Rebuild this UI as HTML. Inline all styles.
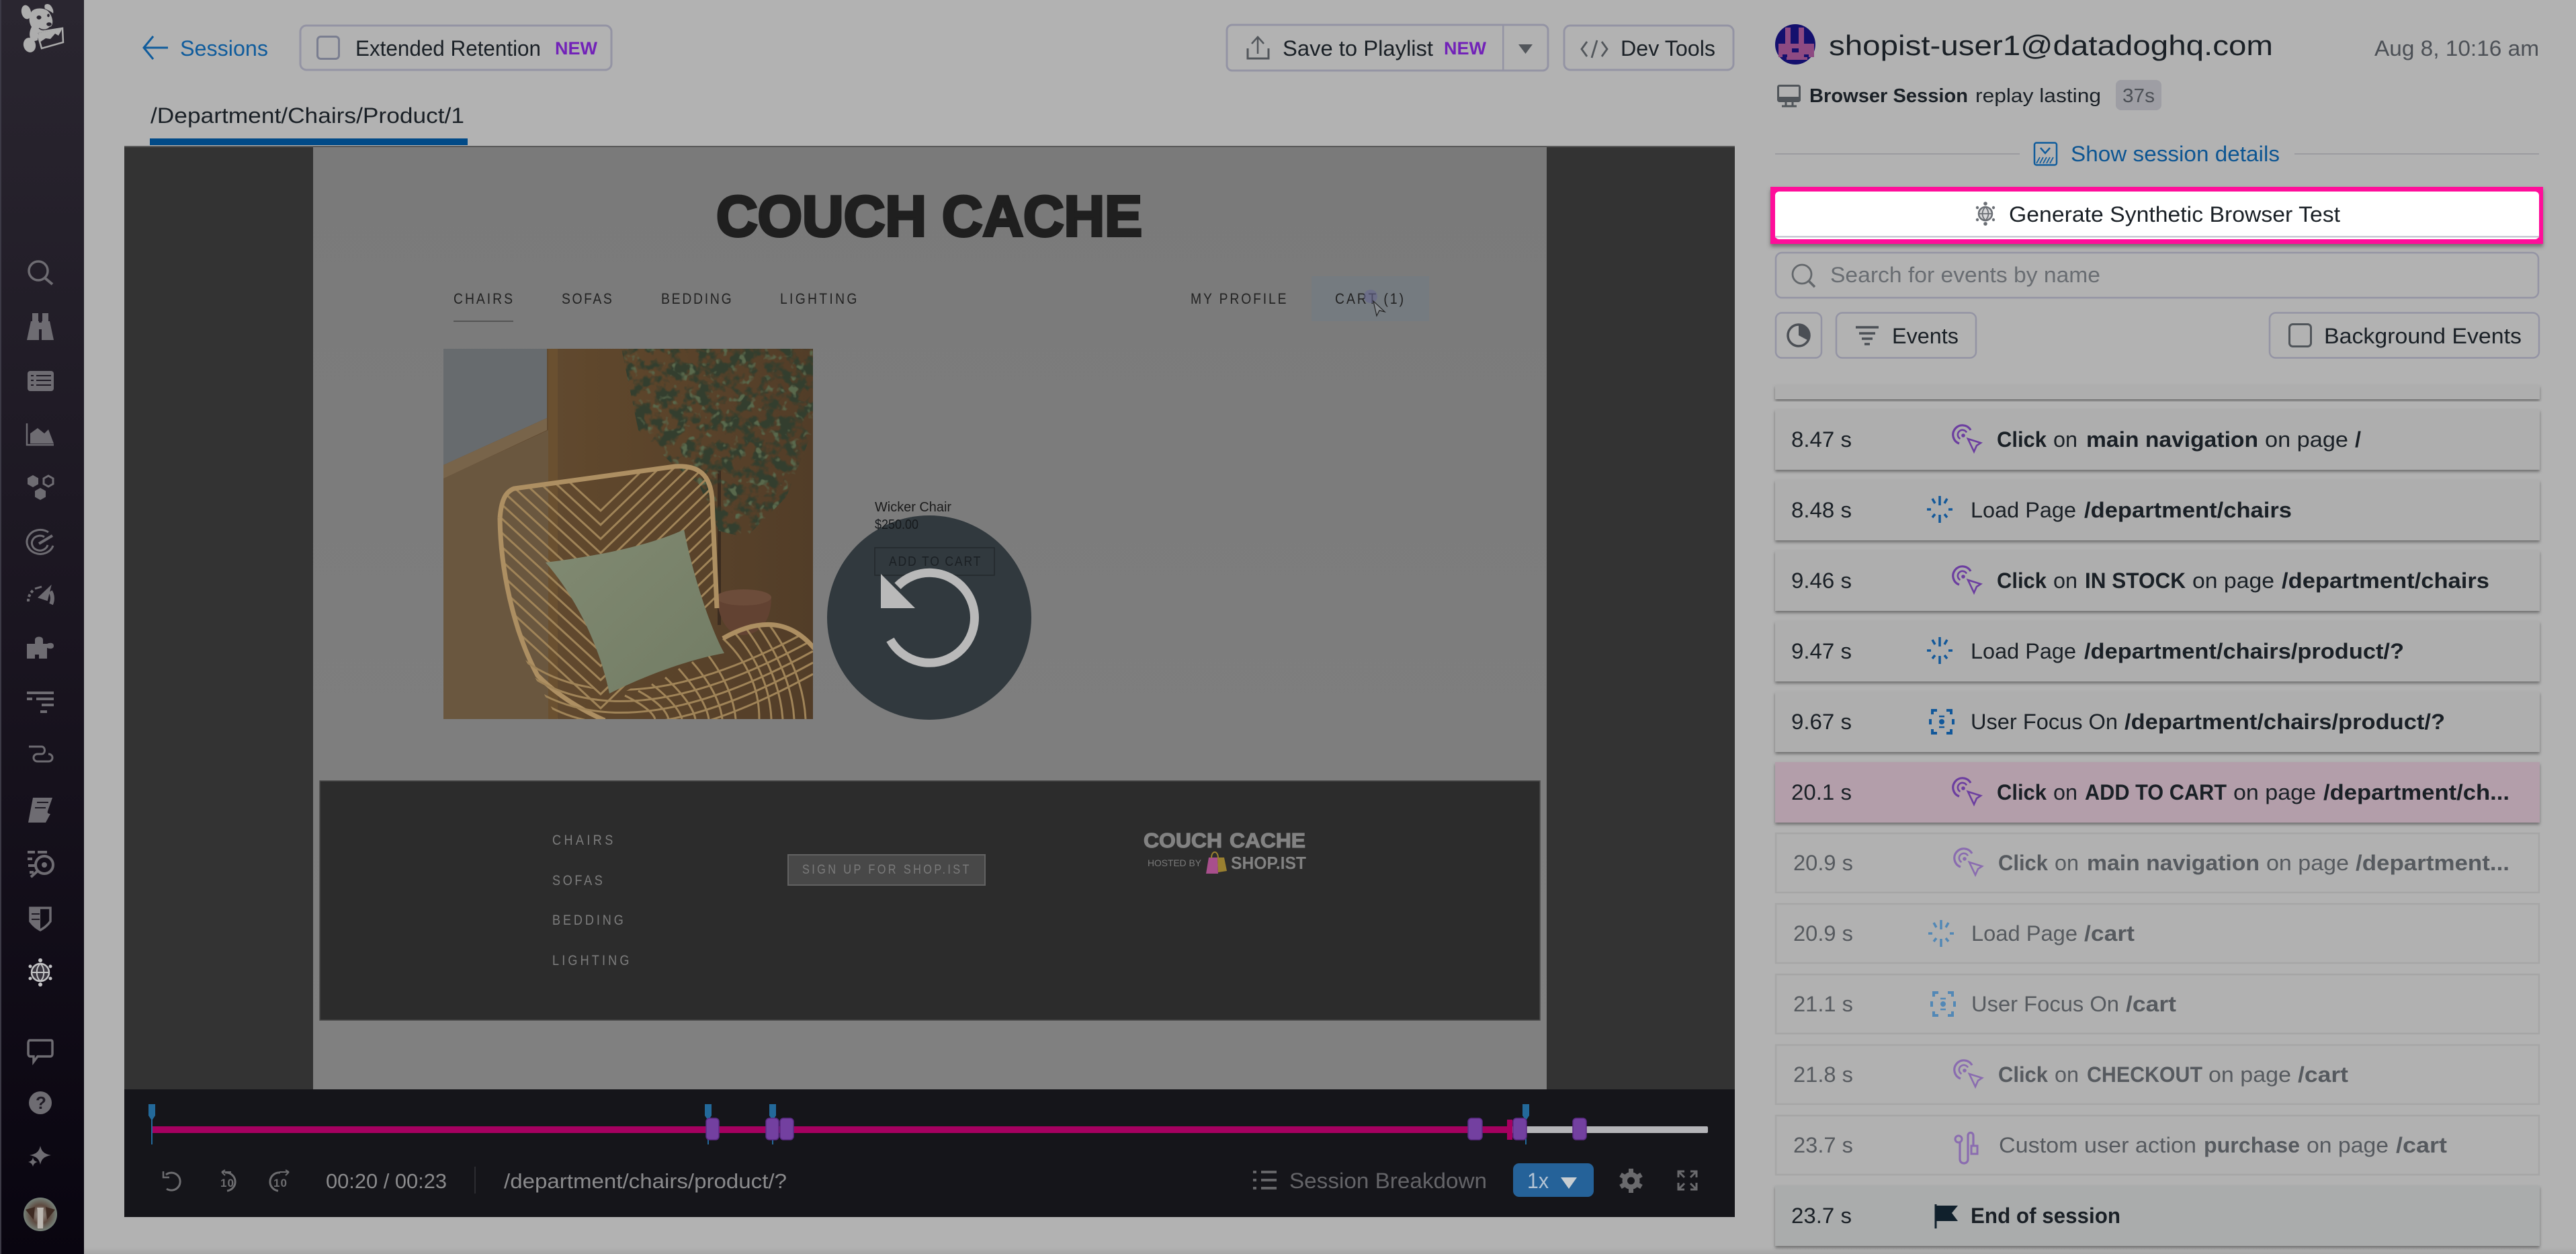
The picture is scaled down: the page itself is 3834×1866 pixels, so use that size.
<!DOCTYPE html>
<html><head><meta charset="utf-8"><title>Session Replay</title>
<style>
html,body{margin:0;padding:0;background:#b2b2b2;width:3834px;height:1866px;overflow:hidden}
svg{display:block}
text{font-family:"Liberation Sans",sans-serif;white-space:pre}
.d{fill:#1a2026;font-size:32px}
.b{font-weight:700}
.f{fill:#565a5f;font-size:32px}
.w{fill:#222;font-size:22px}
.ft{fill:#7d7d7d;font-size:21px}
.c{fill:#8a8a8c;font-size:32px}
</style></head><body>
<svg xmlns="http://www.w3.org/2000/svg" width="3834" height="1866" viewBox="0 0 3834 1866">
<defs>
<linearGradient id="side" x1="0" y1="0" x2="0" y2="1"><stop offset="0" stop-color="#2a2630"/><stop offset=".5" stop-color="#1a1520"/><stop offset="1" stop-color="#090510"/></linearGradient>
<linearGradient id="pg" x1="0" y1="0" x2="0" y2="1"><stop offset="0" stop-color="#7a7a7a"/><stop offset="1" stop-color="#808080"/></linearGradient>
<linearGradient id="wood" x1="0" y1="0" x2="1" y2="0"><stop offset="0" stop-color="#66503a"/><stop offset=".4" stop-color="#5f472c"/><stop offset="1" stop-color="#523d28"/></linearGradient>
<linearGradient id="pil" x1="0" y1="0" x2="1" y2="1"><stop offset="0" stop-color="#818a72"/><stop offset="1" stop-color="#727c64"/></linearGradient>
<linearGradient id="bt" x1="0" y1="0" x2="0" y2="1"><stop offset="0" stop-color="#b2b2b2"/><stop offset="1" stop-color="#a6a6a6"/></linearGradient>
<radialGradient id="av"><stop offset="0" stop-color="#a09a94"/><stop offset=".55" stop-color="#5e4a40"/><stop offset="1" stop-color="#76827a"/></radialGradient>
<filter id="sh" x="-2%" y="-10%" width="104%" height="125%"><feDropShadow dx="0" dy="3" stdDeviation="2" flood-color="#555" flood-opacity=".7"/></filter>
<filter id="sh2" x="-2%" y="-10%" width="104%" height="130%"><feDropShadow dx="0" dy="4" stdDeviation="3" flood-color="#444" flood-opacity=".6"/></filter>
<filter id="leafD" x="0" y="0" width="100%" height="100%" color-interpolation-filters="sRGB"><feTurbulence type="fractalNoise" baseFrequency=".05" numOctaves="3" seed="7" result="n"/><feColorMatrix in="n" type="matrix" values="0 0 0 0 .2 0 0 0 0 .245 0 0 0 0 .18 6 0 0 0 -2.700" result="l"/><feComposite in="l" in2="SourceAlpha" operator="in"/></filter>
<filter id="leafL" x="0" y="0" width="100%" height="100%" color-interpolation-filters="sRGB"><feTurbulence type="fractalNoise" baseFrequency=".08" numOctaves="2" seed="21" result="n"/><feColorMatrix in="n" type="matrix" values="0 0 0 0 .35 0 0 0 0 .41 0 0 0 0 .3 7 0 0 0 -4.200" result="l"/><feComposite in="l" in2="SourceAlpha" operator="in"/></filter>
<clipPath id="img"><rect x="660" y="519" width="550" height="551"/></clipPath>
<clipPath id="back"><path d="M744 771C746 745 752 732 765 727L1005 694C1040 692 1058 706 1060 745L1067 905 1040 1000 890 1070 790 1000C760 930 745 850 744 771Z"/></clipPath>
<clipPath id="seat"><path d="M770 960L910 1040 1076 950C1120 925 1170 915 1210 965V1070H830Z"/></clipPath>
<g id="click" fill="none" stroke-width="2.600">
<path d="M25 6A14 14 0 1 0 8 26" stroke-width="3.200"/><path d="M19 9.500A7 7 0 1 0 9.500 19"/><circle cx="14" cy="14" r="2.800" stroke="none" fill="currentColor"/>
<path d="M21 19L40 25 34 29 30 38Z"/></g>
<g id="load" stroke-width="3.500" fill="none"><path d="M0-20V-6M-11-16L-7-9M11-16L7-9M-19 0H-13M13 0H19M-11 12L-7 7M11 12L7 7M0 8V20"/></g>
<g id="focus" fill="none" stroke-width="4"><path d="M5 8V2H12M26 2H33V8M5 30V36H12M26 36H33V30M2 15V23M36 15V23"/><path d="M15 11H23M15 27H23" stroke-width="2.500"/><circle cx="19" cy="19" r="4" fill="currentColor" stroke="none"/></g>
</defs>

<rect width="3834" height="1866" fill="#b2b2b2"/>
<rect y="1856" width="3834" height="10" fill="url(#bt)"/>

<!-- sidebar -->
<rect width="125" height="1866" fill="url(#side)"/><rect width="2" height="1866" fill="#3c3a46"/>
<g fill="#adadad">
<ellipse cx="39" cy="18" rx="7" ry="10.500" transform="rotate(-12 39 18)"/>
<path d="M67 7C70 5 74 6 76 9 79 13 80 17 79 20 76 17 71 15 67 13 66 11 66 9 67 7Z"/>
<path d="M47 17C52 11 66 11 72 17 77 23 79 30 78 35 77 41 70 44 60 46 56 47 56 52 56 60L48 62C42 54 44 46 47 40 42 32 43 23 47 17Z"/>
<ellipse cx="44" cy="67" rx="9" ry="11" transform="rotate(-15 44 67)"/>
</g>
<ellipse cx="58" cy="26" rx="3.500" ry="3" fill="#2a2630"/><ellipse cx="73" cy="36" rx="3.800" ry="2.800" fill="#2a2630"/><ellipse cx="72" cy="23" rx="1.800" ry="2.500" fill="#2a2630"/>
<path d="M58 42C64 46 70 45 75 40" fill="none" stroke="#2a2630" stroke-width="1.500"/>
<path d="M55 48L93 42 94 63 62 72Z" fill="#2a2630" stroke="#adadad" stroke-width="2.500"/>
<path d="M57 49L92 43 91 46 87 53 82 50 75 58 68 57 59 63Z" fill="#adadad"/>
<g fill="#6e6c72" stroke="#6e6c72">
<circle cx="57" cy="403" r="14" fill="none" stroke-width="3.500"/><path d="M66 413L78 423" stroke-width="4" fill="none"/>
<path d="M48 466h9v12h-9zM63 466h9v12h-9z" stroke="none"/><path d="M46 478h12v28H40zM74 478H62v28h18z" stroke="none"/><rect x="57" y="480" width="6" height="10" stroke="none"/>
<rect x="41" y="552" width="39" height="30" rx="4" stroke="none"/><path d="M46 559h4M46 566h4M46 573h4M54 559h22M54 566h22M54 573h22" stroke="#1e1a24" stroke-width="2" fill="none"/>
<path d="M40 630V662H80" fill="none" stroke-width="2.500"/><path d="M45 660V645L56 637 66 645 72 639 80 660Z" stroke="none"/>
<path d="M49 707L57 711.500V720.500L49 725 41 720.500V711.500ZM60 726L68 730.500V739.500L60 744 52 739.500V730.500Z" stroke="none"/><path d="M72 708L79 712V720L72 724 65 720V712Z" fill="none" stroke-width="3"/>
<g fill="none"><path d="M72 792A20 18 0 1 0 79 812" stroke-width="3"/><path d="M66 799A12 11 0 1 0 71 811" stroke-width="3"/><path d="M58 809L78 797" stroke-width="4"/></g>
<path d="M42 895A21 21 0 0 1 50 878" fill="none" stroke-width="4" stroke-dasharray="4 3"/><path d="M52 876L62 873" stroke-width="3"/><path d="M58 889L75 873 70 893Z" stroke-width="2"/><path d="M75 880A20 20 0 0 1 76 899" fill="none" stroke-width="6"/>
<path d="M40 958H52V952C52 946 64 946 64 952V958H70C74 956 80 956 80 961 80 966 74 966 70 964V980H58V974H52V980H40Z" stroke="none"/>
<path d="M40 1031H80M40 1040H48M54 1040H80M62 1049H80M60 1059H70" stroke-width="4" fill="none"/>
<path d="M43 1116H62C68 1116 68 1127 62 1127H56C48 1127 48 1138 56 1138H72C80 1138 80 1127 72 1127" fill="none" stroke-width="3" transform="translate(0,-5)"/>
<path d="M49 1187H78L71 1207C70 1210 72 1211 75 1211L68 1224H42Z" stroke="none"/><path d="M55 1194H72M52 1202H68" stroke="#1e1a24" stroke-width="2" fill="none"/>
<path d="M41 1268H52M56 1268H70M41 1278H48M42 1288H52M44 1298H50" stroke-width="4" fill="none"/><circle cx="66" cy="1287" r="13" fill="none" stroke-width="4"/><circle cx="66" cy="1287" r="4" stroke="none"/><path d="M56 1296L46 1305" stroke-width="4"/>
<path d="M45 1351H75V1371C70 1378 65 1381 60 1384 55 1381 50 1378 45 1371Z" fill="none" stroke-width="3.500"/><path d="M46 1352H60V1383C54 1380 50 1377 46 1371Z" stroke="none"/><path d="M47 1360H59M47 1368H59" stroke="#1e1a24" stroke-width="2"/>
</g>
<g fill="#c4c4c6">
<circle cx="60" cy="1447" r="13" fill="#3a3640" stroke="#c4c4c6" stroke-width="2.500"/><path d="M47 1447H73M60 1434C53 1440 53 1454 60 1460 67 1454 67 1440 60 1434Z" fill="none" stroke="#c4c4c6" stroke-width="2"/>
<circle cx="60" cy="1429" r="3"/><circle cx="60" cy="1465" r="3"/><circle cx="45" cy="1438" r="2.500"/><circle cx="75" cy="1438" r="2.500"/><circle cx="45" cy="1456" r="2.500"/><circle cx="75" cy="1456" r="2.500"/>
</g>
<g fill="#6e6c72" stroke="#6e6c72">
<path d="M44 1548H76C78 1548 78 1550 78 1552V1568C78 1570 77 1572 75 1572H56L50 1580V1572H45C43 1572 42 1570 42 1568V1552C42 1550 43 1548 44 1548Z" fill="none" stroke-width="3.500"/>
<circle cx="60" cy="1641" r="17" stroke="none"/>
<path d="M60 1705C62 1714 66 1717 76 1719 66 1721 62 1724 60 1733 58 1724 54 1721 44 1719 54 1717 58 1714 60 1705ZM49 1722C50 1727 52 1728 56 1729 52 1730 50 1732 49 1736 48 1732 46 1730 42 1729 46 1728 48 1727 49 1722Z" stroke="none"/>
</g>
<text x="53" y="1650" font-size="26" font-weight="700" fill="#1e1a24">?</text>
<circle cx="60" cy="1807" r="25" fill="url(#av)"/><path d="M55 1797C57 1805 55 1820 56 1828H64C65 1820 63 1805 65 1797Z" fill="#bdb8b2"/><path d="M38 1800L52 1796 50 1815ZM82 1800L68 1796 70 1815Z" fill="#3e2a22"/>

<!-- top left -->
<path d="M250 71H216M228 54L214 71 228 88" fill="none" stroke="#105c9c" stroke-width="3"/>
<text x="268" y="83" class="d" style="fill:#105c9c" textLength="131" lengthAdjust="spacingAndGlyphs">Sessions</text>
<rect x="447" y="38" width="463" height="66" rx="9" fill="none" stroke="#9494a4" stroke-width="3"/>
<rect x="472.500" y="54.500" width="32" height="33" rx="5" fill="none" stroke="#7a7e90" stroke-width="3"/>
<text x="529" y="83" class="d" textLength="276" lengthAdjust="spacingAndGlyphs">Extended Retention</text>
<text x="826" y="81" font-size="27" font-weight="700" fill="#7222b8" textLength="63" lengthAdjust="spacingAndGlyphs">NEW</text>
<text x="224" y="183" class="d" textLength="467" lengthAdjust="spacingAndGlyphs">/Department/Chairs/Product/1</text>
<rect x="223" y="206" width="473" height="10" fill="#014a87"/>

<!-- top right buttons -->
<path d="M1834 37H2296A8 8 0 0 1 2304 45V97A8 8 0 0 1 2296 105H1834A8 8 0 0 1 1826 97V45A8 8 0 0 1 1834 37Z" fill="none" stroke="#9494a4" stroke-width="3"/>
<rect x="2236" y="37" width="2.500" height="68" fill="#9494a4"/>
<path d="M1872 80V56M1863 65L1872 55 1881 65" fill="none" stroke="#52565b" stroke-width="2.500"/><path d="M1857 72V87H1888V72" fill="none" stroke="#52565b" stroke-width="3"/>
<text x="1909" y="83" class="d" textLength="224" lengthAdjust="spacingAndGlyphs">Save to Playlist</text>
<text x="2149" y="81" font-size="27" font-weight="700" fill="#7222b8" textLength="63" lengthAdjust="spacingAndGlyphs">NEW</text>
<path d="M2260 66H2281L2270.500 80Z" fill="#52565b"/>
<rect x="2328" y="38" width="252" height="66" rx="9" fill="none" stroke="#9494a4" stroke-width="3"/>
<path d="M2362 62L2354 73 2362 84M2384 62L2392 73 2384 84M2377 60L2369 86" fill="none" stroke="#52565b" stroke-width="2.800"/>
<text x="2412" y="83" class="d" textLength="141" lengthAdjust="spacingAndGlyphs">Dev Tools</text>

<!-- player -->
<rect x="185" y="217" width="2397" height="1404" fill="#333"/>
<rect x="185" y="217" width="2397" height="2" fill="#5a5a5a"/>
<rect x="466" y="219" width="1836" height="1402" fill="url(#pg)"/>
<g font-weight="700" fill="#1f1f1f" stroke="#1f1f1f" stroke-width="4" font-size="85">
<text x="1066" y="351" textLength="313" lengthAdjust="spacingAndGlyphs">COUCH</text>
<text x="1402" y="351" textLength="298" lengthAdjust="spacingAndGlyphs">CACHE</text>
</g>
<rect x="1952" y="411" width="175" height="67" fill="#757b80"/>
<text class="w" transform="translate(675 452) scale(.88 1)" textLength="100" lengthAdjust="spacing">CHAIRS</text>
<text class="w" transform="translate(836 452) scale(.88 1)" textLength="85" lengthAdjust="spacing">SOFAS</text>
<text class="w" transform="translate(984 452) scale(.88 1)" textLength="119" lengthAdjust="spacing">BEDDING</text>
<text class="w" transform="translate(1161 452) scale(.88 1)" textLength="130" lengthAdjust="spacing">LIGHTING</text>
<text class="w" transform="translate(1772 452) scale(.88 1)" textLength="162" lengthAdjust="spacing">MY PROFILE</text>
<text class="w" transform="translate(1987 452) scale(.88 1)" textLength="116" lengthAdjust="spacing">CART (1)</text>
<rect x="675" y="477" width="89" height="2" fill="#555"/>
<circle cx="2040" cy="441" r="10" fill="#66668e" opacity=".6"/>
<path d="M2044 448L2049 470 2053 462 2061 464Z" fill="#8a8e92" stroke="#222" stroke-width="1.200"/>

<!-- product image -->
<g clip-path="url(#img)">
<rect x="660" y="519" width="550" height="551" fill="url(#wood)"/>
<path d="M660 712L816 640V1070H660Z" fill="#6a573f"/>
<rect x="816" y="519" width="14" height="551" fill="#6a5030"/>
<path d="M660 519H814V622L660 692Z" fill="#676b6e"/>
<path d="M660 692L814 622V640L660 712Z" fill="#78644a"/>
<rect x="1068" y="700" width="5" height="230" fill="#3b2c20"/>
<path d="M1067 889H1148C1148 925 1130 945 1105 945 1085 945 1070 925 1067 889Z" fill="#624232"/><ellipse cx="1107" cy="889" rx="41" ry="12" fill="#6c4c3a"/>
<g filter="url(#leafD)"><path d="M925 519H1210V640L1170 740 1110 800 1070 790 1040 720 1000 690 950 640Z"/></g>
<g filter="url(#leafL)"><path d="M925 519H1210V640L1170 740 1110 800 1070 790 1040 720 1000 690 950 640Z"/></g>
<g clip-path="url(#back)" fill="none" stroke="#a08458" stroke-width="3">
<path d="M720 600L894 760 1080 580"/><path d="M720 621L894 781 1080 601"/><path d="M720 642L894 802 1080 622"/><path d="M720 663L894 823 1080 643"/><path d="M720 684L894 844 1080 664"/><path d="M720 705L894 865 1080 685"/><path d="M720 726L894 886 1080 706"/><path d="M720 747L894 907 1080 727"/><path d="M720 768L894 928 1080 748"/><path d="M720 789L894 949 1080 769"/><path d="M720 810L894 970 1080 790"/><path d="M720 831L894 991 1080 811"/><path d="M720 852L894 1012 1080 832"/><path d="M720 873L894 1033 1080 853"/><path d="M720 894L894 1054 1080 874"/>
</g>
<path d="M744 771C746 745 752 732 765 727L1005 694C1040 692 1058 706 1060 745L1067 905" fill="none" stroke="#ad8f62" stroke-width="7"/>
<path d="M744 771C745 850 765 940 800 1005Q840 1045 900 1072" fill="none" stroke="#ad8f62" stroke-width="7"/>
<g clip-path="url(#seat)" fill="none" stroke="#a08458" stroke-width="3">
<path d="M770 975Q920 1095 1210 935"/><path d="M770 992Q920 1112 1210 952"/><path d="M770 1009Q920 1129 1210 969"/><path d="M780 1026Q920 1146 1210 986"/><path d="M790 1043Q920 1163 1210 1003"/><path d="M1076 950Q1130 1000 1130 1070"/><path d="M1092 940Q1145 1000 1148 1070"/><path d="M1108 932Q1160 1000 1165 1070"/><path d="M1124 926Q1178 1000 1182 1070"/><path d="M1140 923Q1195 995 1199 1070"/><path d="M1050 970Q1090 1020 1095 1070"/><path d="M1030 985Q1070 1030 1075 1070"/><path d="M1010 995Q1050 1040 1055 1070"/><path d="M990 1008Q1030 1045 1035 1070"/><path d="M970 1018Q1010 1050 1015 1070"/><path d="M950 1028Q990 1050 995 1070"/><path d="M930 1035Q970 1055 975 1070"/>
</g>
<path d="M1076 950C1120 925 1170 915 1212 965" fill="none" stroke="#ad8f62" stroke-width="7"/>
<path d="M812 837C870 830 960 815 1018 788 1030 850 1055 930 1078 972 1030 980 960 1005 907 1032 890 950 850 880 812 837Z" fill="url(#pil)"/>
</g>

<text x="1302" y="761" font-size="20" fill="#1a1a1a" textLength="114" lengthAdjust="spacingAndGlyphs">Wicker Chair</text>
<circle cx="1383" cy="919" r="152" fill="#31393e"/>
<rect x="1302" y="815" width="178" height="41" fill="none" stroke="#22282c" stroke-width="1.500"/>
<text transform="translate(1323 842) scale(.88 1)" style="font-size:20px" fill="#1b2024" textLength="155" lengthAdjust="spacing">ADD TO CART</text>
<text x="1302" y="787" font-size="20" fill="#16191c" textLength="65" lengthAdjust="spacingAndGlyphs">$250.00</text>
<path d="M1336 872A67 67 0 1 1 1325 952" fill="none" stroke="#b9b9b9" stroke-width="13"/>
<path d="M1311 854V905H1362Z" fill="#b9b9b9"/>

<!-- footer -->
<rect x="476" y="1162" width="1816" height="356" fill="#2c2c2c" stroke="#4a4a4a" stroke-width="1.500"/>
<text class="ft" transform="translate(822 1257) scale(.86 1)" textLength="105" lengthAdjust="spacing">CHAIRS</text>
<text class="ft" transform="translate(822 1317) scale(.86 1)" textLength="87" lengthAdjust="spacing">SOFAS</text>
<text class="ft" transform="translate(822 1376) scale(.86 1)" textLength="123" lengthAdjust="spacing">BEDDING</text>
<text class="ft" transform="translate(822 1436) scale(.86 1)" textLength="133" lengthAdjust="spacing">LIGHTING</text>
<rect x="1173" y="1272" width="293" height="45" fill="#484848" stroke="#626262" stroke-width="2"/>
<text transform="translate(1194 1300) scale(.86 1)" font-size="19" fill="#7a7a7a" textLength="289" lengthAdjust="spacing">SIGN UP FOR SHOP.IST</text>
<g font-size="31" font-weight="700" fill="#828282" stroke="#828282" stroke-width="1.200">
<text x="1702" y="1261" textLength="117" lengthAdjust="spacingAndGlyphs">COUCH</text>
<text x="1830" y="1261" textLength="113" lengthAdjust="spacingAndGlyphs">CACHE</text>
</g>
<text x="1708" y="1289" font-size="14" fill="#7a7a7a" textLength="80" lengthAdjust="spacingAndGlyphs">HOSTED BY</text>
<path d="M1795 1300L1799 1276H1812L1813 1300Z" fill="#a84f8c"/><path d="M1812 1276H1822L1826 1296 1813 1298Z" fill="#9a8030"/><path d="M1803 1277C1803 1265 1813 1265 1813 1277" fill="none" stroke="#9a8030" stroke-width="2"/>
<text x="1832" y="1293" font-size="26" font-weight="700" fill="#828282" textLength="112" lengthAdjust="spacingAndGlyphs">SHOP.IST</text>

<!-- control bar -->
<rect x="185" y="1621" width="2397" height="190" fill="#15151a"/>
<rect x="226" y="1676" width="2024" height="10" fill="#a50060"/>
<rect x="2250" y="1676" width="292" height="10" rx="2" fill="#b4b4b8"/>
<rect x="2243" y="1666" width="8" height="30" fill="#a50060"/>
<g fill="#23699a">
<path d="M221 1643H231V1660L227 1666V1703H225V1666L221 1660Z"/>
<path d="M1049 1643H1059V1660L1055 1666V1703H1053V1666L1049 1660Z"/>
<path d="M1145 1643H1155V1660L1151 1666V1703H1149V1666L1145 1660Z"/>
<path d="M2266 1643H2276V1660L2272 1666V1703H2270V1666L2266 1660Z"/>
</g>
<g fill="#7340a0" stroke="#5c2a86" stroke-width="1.500">
<rect x="1051" y="1664" width="19" height="32" rx="5"/><rect x="1140" y="1664" width="19" height="32" rx="5"/><rect x="1161" y="1664" width="20" height="32" rx="5"/><rect x="2185" y="1664" width="21" height="32" rx="5"/><rect x="2252" y="1664" width="20" height="32" rx="5"/><rect x="2341" y="1664" width="20" height="32" rx="5"/>
</g>
<g fill="none" stroke="#6d6d70" stroke-width="3">
<path d="M247 1748A13 13 0 1 1 248 1769"/><path d="M243 1743V1752H252" stroke-width="2.500"/>
<path d="M335 1745A13 13 0 1 1 338 1772"/><path d="M330 1744H344M330 1744L335 1741M330 1744L335 1749" stroke-width="2"/>
<path d="M417 1745A13 13 0 1 0 414 1772"/><path d="M430 1744H416M430 1744L425 1741M430 1744L425 1749" stroke-width="2"/>
</g>
<text x="328" y="1766" font-size="17" fill="#6d6d70" font-weight="700" textLength="20">10</text>
<text x="407" y="1766" font-size="17" fill="#6d6d70" font-weight="700" textLength="20">10</text>
<text x="485" y="1768" class="c" style="font-size:31px" textLength="180" lengthAdjust="spacingAndGlyphs">00:20 / 00:23</text>
<rect x="706" y="1736" width="2" height="40" fill="#2c2c31"/>
<text x="750" y="1768" class="c" style="font-size:31px" textLength="421" lengthAdjust="spacingAndGlyphs">/department/chairs/product/?</text>
<path d="M1865 1744H1870M1865 1756H1870M1865 1768H1870M1877 1744H1900M1877 1756H1900M1877 1768H1900" stroke="#656568" stroke-width="4" fill="none"/>
<text x="1919" y="1768" style="font-size:32px" fill="#646468" textLength="294" lengthAdjust="spacingAndGlyphs">Session Breakdown</text>
<rect x="2252" y="1731" width="120" height="50" rx="9" fill="#256299"/>
<text x="2273" y="1768" font-size="32" fill="#b4c4d4" textLength="32" lengthAdjust="spacingAndGlyphs">1x</text>
<path d="M2323 1752H2347L2335 1769Z" fill="#c8ced2"/>
<path d="M2427.500 1739V1775M2412 1748L2443 1766M2412 1766L2443 1748" stroke="#6a6a6d" stroke-width="7"/><circle cx="2427.500" cy="1757" r="13" fill="#6a6a6d"/><circle cx="2427.500" cy="1757" r="5.500" fill="#15151a"/>
<path d="M2498 1752V1743H2507M2525 1752V1743H2516M2498 1760V1770H2507M2525 1760V1770H2516M2499 1744L2507 1752M2524 1744L2516 1752M2499 1769L2507 1761M2524 1769L2516 1761" fill="none" stroke="#6a6a6d" stroke-width="3"/>

<!-- right header -->
<circle cx="2672" cy="66" r="30" fill="#14106e"/>
<path d="M2657 41H2665V65H2677V41H2685V65H2700V85H2690V89H2659V85H2647V65H2657Z" fill="#8d4a82"/><rect x="2667" y="72" width="10" height="6" fill="#14106e"/><rect x="2653" y="81" width="7" height="4" fill="#14106e"/><rect x="2685" y="81" width="7" height="4" fill="#14106e"/>
<text x="2722" y="82" font-size="42" fill="#1a2026" textLength="661" lengthAdjust="spacingAndGlyphs">shopist-user1@datadoghq.com</text>
<text x="3534" y="83" font-size="32" fill="#4c5056" textLength="245" lengthAdjust="spacingAndGlyphs">Aug 8, 10:16 am</text>
<rect x="2646.500" y="127.500" width="32" height="23" rx="2" fill="none" stroke="#50555a" stroke-width="3"/><path d="M2646 144H2680V150H2646Z" fill="#50555a"/><path d="M2658 152V157M2668 152V157M2652 158H2674" stroke="#50555a" stroke-width="3"/>
<text x="2693" y="152" class="d b" style="font-size:29px" textLength="236" lengthAdjust="spacingAndGlyphs">Browser Session</text>
<text x="2940" y="152" class="d" style="font-size:29px" textLength="187" lengthAdjust="spacingAndGlyphs">replay lasting</text>
<rect x="3149" y="119" width="68" height="45" rx="8" fill="#9e9ea4"/>
<text x="3159" y="152" style="font-size:29px" fill="#4c5056" textLength="48" lengthAdjust="spacingAndGlyphs">37s</text>
<path d="M2642 229H3006M3415 229H3779" stroke="#9c9ca0" stroke-width="2"/>
<rect x="3028" y="212.500" width="33" height="33" rx="3" fill="none" stroke="#105c9c" stroke-width="2.500"/><path d="M3037 220L3044 228 3051 220" fill="none" stroke="#105c9c" stroke-width="2.500"/><path d="M3031 243L3036 234M3036 243L3041 234M3041 243L3046 234M3046 243L3051 234M3051 243L3056 234" stroke="#105c9c" stroke-width="1.800"/>
<text x="3082" y="240" class="d" style="fill:#0d5592" textLength="311" lengthAdjust="spacingAndGlyphs">Show session details</text>

<!-- pink box -->
<rect x="2635" y="278" width="1150" height="85" fill="#ff0d9a" filter="url(#sh2)"/>
<rect x="2642" y="285" width="1137" height="71" rx="6" fill="#fff"/>
<rect x="2642" y="351" width="1137" height="2.500" fill="#c8c8d4"/>
<circle cx="2955" cy="318" r="10" fill="#d8d8da" stroke="#6a6e74" stroke-width="2.500"/><path d="M2945 318H2965M2955 308C2949 314 2949 322 2955 328 2961 322 2961 314 2955 308Z" fill="none" stroke="#6a6e74" stroke-width="1.800"/>
<g fill="#6a6e74"><circle cx="2955" cy="303" r="2.800"/><circle cx="2955" cy="333" r="2.800"/><circle cx="2943" cy="309" r="2.200"/><circle cx="2967" cy="309" r="2.200"/><circle cx="2943" cy="327" r="2.200"/><circle cx="2967" cy="327" r="2.200"/></g>
<text x="2990" y="330" class="d" textLength="493" lengthAdjust="spacingAndGlyphs">Generate Synthetic Browser Test</text>

<!-- search -->
<rect x="2643" y="376" width="1135" height="67" rx="9" fill="none" stroke="#9494a4" stroke-width="2.500"/>
<circle cx="2682" cy="408" r="14" fill="none" stroke="#63676b" stroke-width="2.800"/><path d="M2692 418L2701 427" stroke="#63676b" stroke-width="3.500"/>
<text x="2724" y="420" style="font-size:32px" fill="#696d72" textLength="402" lengthAdjust="spacingAndGlyphs">Search for events by name</text>
<rect x="2643" y="465.500" width="68" height="67" rx="9" fill="none" stroke="#9494a4" stroke-width="2.500"/>
<circle cx="2677" cy="499" r="16" fill="none" stroke="#4b4f55" stroke-width="3.500"/><path d="M2677 499V482A17 17 0 0 1 2692 507Z" fill="#4b4f55"/>
<rect x="2733" y="465.500" width="208" height="67" rx="9" fill="none" stroke="#9494a4" stroke-width="2.500"/>
<path d="M2762 487H2796M2767 496H2791M2771 504H2787M2775 512H2783" stroke="#4b4f55" stroke-width="3.500" fill="none"/>
<text x="2816" y="511" class="d" textLength="99" lengthAdjust="spacingAndGlyphs">Events</text>
<rect x="3378" y="465.500" width="401" height="67" rx="9" fill="none" stroke="#9494a4" stroke-width="2.500"/>
<rect x="3407.500" y="482.500" width="32" height="33" rx="5" fill="none" stroke="#50555a" stroke-width="3"/>
<text x="3459" y="511" class="d" textLength="294" lengthAdjust="spacingAndGlyphs">Background Events</text>

<!-- rows -->
<path d="M2642 573H3780V594H2642Z" fill="#aeaeae" filter="url(#sh)"/>
<g filter="url(#sh)" fill="#aeaeae">
<rect x="2642" y="609" width="1138" height="90"/><rect x="2642" y="714" width="1138" height="90"/><rect x="2642" y="819" width="1138" height="90"/><rect x="2642" y="924" width="1138" height="90"/><rect x="2642" y="1029" width="1138" height="90"/><rect x="2642" y="1134" width="1138" height="90" fill="#b39eaa"/><rect x="2642" y="1764" width="1138" height="90" fill="#aaacac"/>
</g>
<g fill="#b1b1b1" stroke="#a6a6a6" stroke-width="2.500">
<rect x="2643" y="1240" width="1136" height="88"/><rect x="2643" y="1345" width="1136" height="88"/><rect x="2643" y="1450" width="1136" height="88"/><rect x="2643" y="1555" width="1136" height="88"/><rect x="2643" y="1660" width="1136" height="88"/>
</g>

<!-- row icons -->
<g style="color:#6c3ea0" stroke="#6c3ea0" fill="none">
<use href="#click" x="2908" y="634"/><use href="#click" x="2908" y="844"/><use href="#click" x="2908" y="1159"/>
</g>
<g style="color:#8a6cb0" stroke="#8a6cb0" fill="none">
<use href="#click" x="2910" y="1264"/><use href="#click" x="2910" y="1579"/>
<circle cx="2915" cy="1695" r="5" stroke-width="3"/><path d="M2917 1700V1725C2917 1733 2929 1733 2929 1725V1690C2929 1684 2937 1684 2937 1690V1705" stroke-width="3.200"/><rect x="2934" y="1705" width="9" height="12" stroke-width="3"/>
</g>
<g stroke="#12589a"><use href="#load" x="2887" y="758"/><use href="#load" x="2887" y="968"/></g>
<g stroke="#5288b6"><use href="#load" x="2889" y="1389"/></g>
<use href="#focus" x="2871" y="1055" stroke="#12589a" style="color:#12589a"/>
<use href="#focus" x="2873" y="1475" stroke="#5288b6" style="color:#5288b6"/>
<path d="M2881 1792V1828" stroke="#10202c" stroke-width="3"/><path d="M2882 1794H2914L2905 1805 2914 1817H2882Z" fill="#10202c"/>

<!-- row text -->
<text x="2666" y="665" class="d" textLength="90" lengthAdjust="spacingAndGlyphs">8.47 s</text>
<text x="2972" y="665" class="d b" textLength="74" lengthAdjust="spacingAndGlyphs">Click</text><text x="3056" y="665" class="d" textLength="36" lengthAdjust="spacingAndGlyphs">on</text><text x="3105" y="665" class="d b" textLength="256" lengthAdjust="spacingAndGlyphs">main navigation</text><text x="3371" y="665" class="d" textLength="124" lengthAdjust="spacingAndGlyphs">on page</text><text x="3505" y="665" class="d b" textLength="9" lengthAdjust="spacingAndGlyphs">/</text>

<text x="2666" y="770" class="d" textLength="90" lengthAdjust="spacingAndGlyphs">8.48 s</text>
<text x="2933" y="770" class="d" textLength="157" lengthAdjust="spacingAndGlyphs">Load Page</text><text x="3102" y="770" class="d b" textLength="309" lengthAdjust="spacingAndGlyphs">/department/chairs</text>

<text x="2666" y="875" class="d" textLength="90" lengthAdjust="spacingAndGlyphs">9.46 s</text>
<text x="2972" y="875" class="d b" textLength="74" lengthAdjust="spacingAndGlyphs">Click</text><text x="3056" y="875" class="d" textLength="36" lengthAdjust="spacingAndGlyphs">on</text><text x="3103" y="875" class="d b" textLength="150" lengthAdjust="spacingAndGlyphs">IN STOCK</text><text x="3263" y="875" class="d" textLength="122" lengthAdjust="spacingAndGlyphs">on page</text><text x="3396" y="875" class="d b" textLength="309" lengthAdjust="spacingAndGlyphs">/department/chairs</text>

<text x="2666" y="980" class="d" textLength="90" lengthAdjust="spacingAndGlyphs">9.47 s</text>
<text x="2933" y="980" class="d" textLength="157" lengthAdjust="spacingAndGlyphs">Load Page</text><text x="3102" y="980" class="d b" textLength="476" lengthAdjust="spacingAndGlyphs">/department/chairs/product/?</text>

<text x="2666" y="1085" class="d" textLength="90" lengthAdjust="spacingAndGlyphs">9.67 s</text>
<text x="2933" y="1085" class="d" textLength="219" lengthAdjust="spacingAndGlyphs">User Focus On</text><text x="3162" y="1085" class="d b" textLength="477" lengthAdjust="spacingAndGlyphs">/department/chairs/product/?</text>

<text x="2666" y="1190" class="d" textLength="90" lengthAdjust="spacingAndGlyphs">20.1 s</text>
<text x="2972" y="1190" class="d b" textLength="74" lengthAdjust="spacingAndGlyphs">Click</text><text x="3056" y="1190" class="d" textLength="36" lengthAdjust="spacingAndGlyphs">on</text><text x="3103" y="1190" class="d b" textLength="211" lengthAdjust="spacingAndGlyphs">ADD TO CART</text><text x="3324" y="1190" class="d" textLength="123" lengthAdjust="spacingAndGlyphs">on page</text><text x="3458" y="1190" class="d b" textLength="277" lengthAdjust="spacingAndGlyphs">/department/ch...</text>

<text x="2669" y="1295" class="f" textLength="89" lengthAdjust="spacingAndGlyphs">20.9 s</text>
<text x="2974" y="1295" class="f b" textLength="74" lengthAdjust="spacingAndGlyphs">Click</text><text x="3058" y="1295" class="f" textLength="36" lengthAdjust="spacingAndGlyphs">on</text><text x="3106" y="1295" class="f b" textLength="257" lengthAdjust="spacingAndGlyphs">main navigation</text><text x="3373" y="1295" class="f" textLength="123" lengthAdjust="spacingAndGlyphs">on page</text><text x="3506" y="1295" class="f b" textLength="229" lengthAdjust="spacingAndGlyphs">/department...</text>

<text x="2669" y="1400" class="f" textLength="89" lengthAdjust="spacingAndGlyphs">20.9 s</text>
<text x="2934" y="1400" class="f" textLength="158" lengthAdjust="spacingAndGlyphs">Load Page</text><text x="3102" y="1400" class="f b" textLength="75" lengthAdjust="spacingAndGlyphs">/cart</text>

<text x="2669" y="1505" class="f" textLength="89" lengthAdjust="spacingAndGlyphs">21.1 s</text>
<text x="2934" y="1505" class="f" textLength="220" lengthAdjust="spacingAndGlyphs">User Focus On</text><text x="3164" y="1505" class="f b" textLength="75" lengthAdjust="spacingAndGlyphs">/cart</text>

<text x="2669" y="1610" class="f" textLength="89" lengthAdjust="spacingAndGlyphs">21.8 s</text>
<text x="2974" y="1610" class="f b" textLength="74" lengthAdjust="spacingAndGlyphs">Click</text><text x="3058" y="1610" class="f" textLength="36" lengthAdjust="spacingAndGlyphs">on</text><text x="3106" y="1610" class="f b" textLength="172" lengthAdjust="spacingAndGlyphs">CHECKOUT</text><text x="3287" y="1610" class="f" textLength="123" lengthAdjust="spacingAndGlyphs">on page</text><text x="3420" y="1610" class="f b" textLength="75" lengthAdjust="spacingAndGlyphs">/cart</text>

<text x="2669" y="1715" class="f" textLength="89" lengthAdjust="spacingAndGlyphs">23.7 s</text>
<text x="2975" y="1715" class="f" textLength="294" lengthAdjust="spacingAndGlyphs">Custom user action</text><text x="3280" y="1715" class="f b" textLength="143" lengthAdjust="spacingAndGlyphs">purchase</text><text x="3433" y="1715" class="f" textLength="122" lengthAdjust="spacingAndGlyphs">on page</text><text x="3566" y="1715" class="f b" textLength="76" lengthAdjust="spacingAndGlyphs">/cart</text>

<text x="2666" y="1820" class="d" textLength="90" lengthAdjust="spacingAndGlyphs">23.7 s</text>
<text x="2933" y="1820" class="d b" textLength="223" lengthAdjust="spacingAndGlyphs">End of session</text>
</svg>
</body></html>
